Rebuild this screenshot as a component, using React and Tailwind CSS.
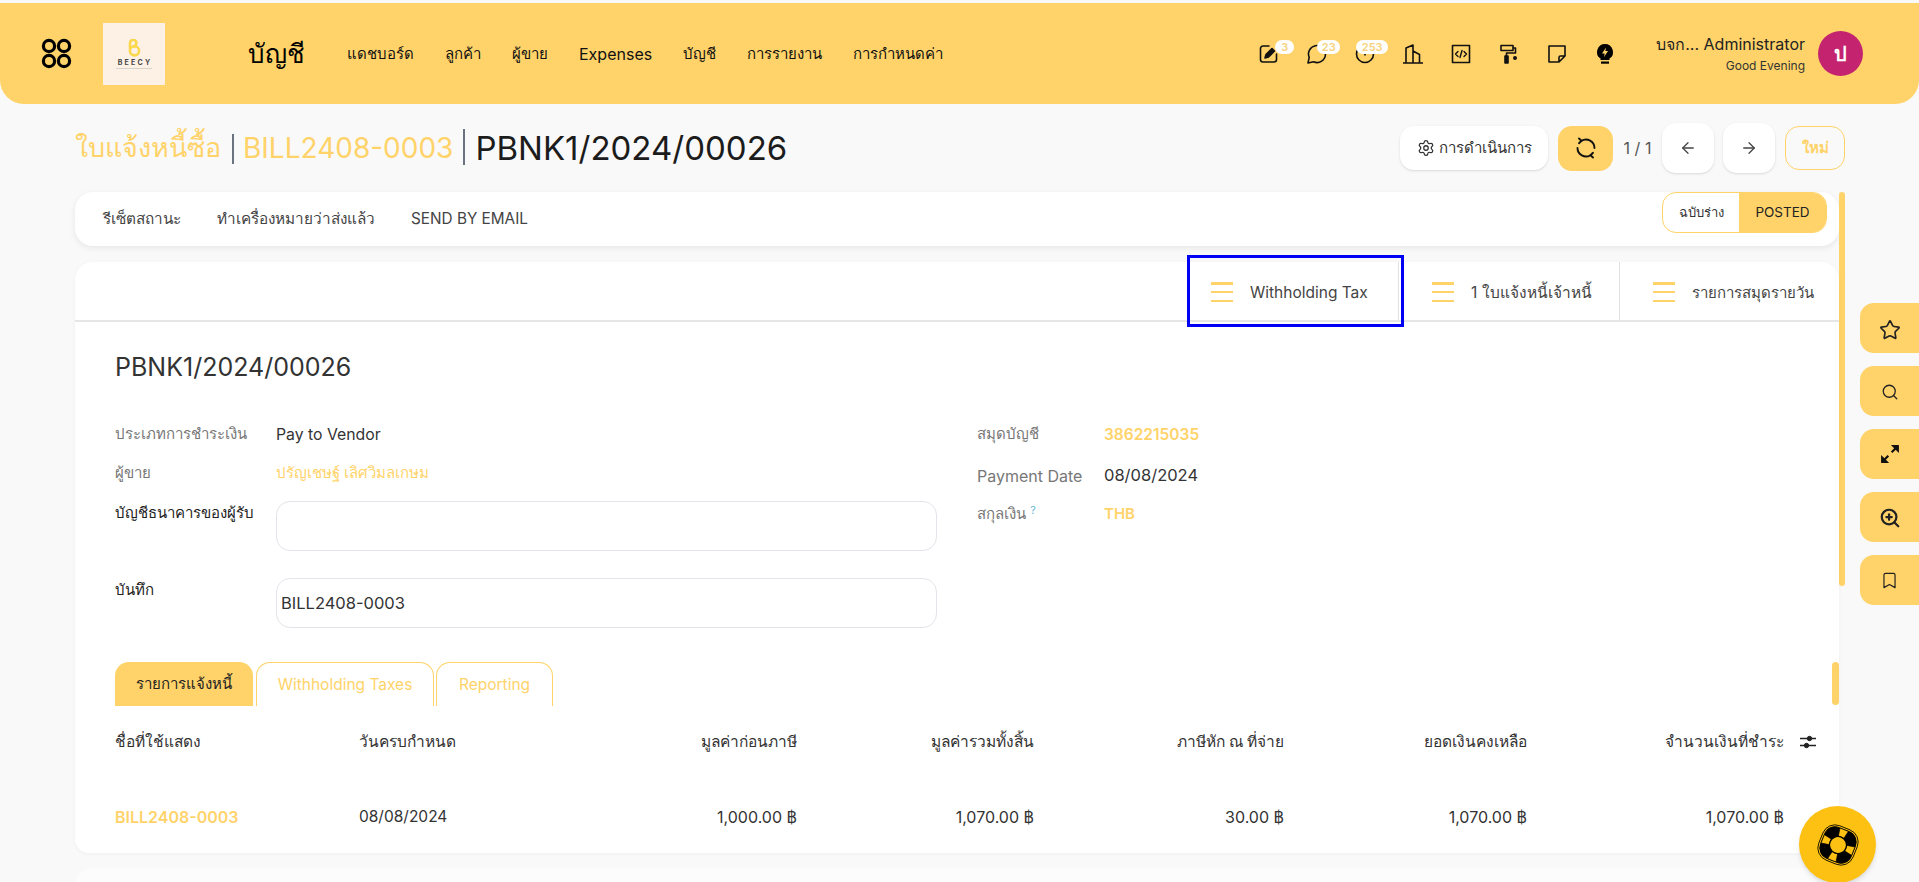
import {ArrowLeft, ArrowRight, Bookmark, Search, Settings, Star, ZoomIn} from "lucide-react";

const font = "font-['Inter','Noto_Sans',sans-serif]";

const navItems = ["แดชบอร์ด", "ลูกค้า", "ผู้ขาย", "Expenses", "บัญชี", "การรายงาน", "การกำหนดค่า"];

function Rings() {
    return (
        <svg width="31" height="31" viewBox="0 0 31 31" fill="none" stroke="#000" strokeWidth="3.2">
            <circle cx="8" cy="8" r="5.6"/>
            <circle cx="23" cy="8" r="5.6"/>
            <circle cx="8" cy="23" r="5.6"/>
            <circle cx="23" cy="23" r="5.6"/>
        </svg>
    );
}

function Logo() {
    return (
        <div className="w-[62px] h-[62px] bg-[#fdf1e6] flex flex-col items-center pt-[16px] shrink-0">
            <svg width="14" height="18" viewBox="0 0 14 18" fill="none" stroke="#fbd84a" strokeWidth="2.6">
                <path d="M3 10V4a3.200 3.200 0 0 1 6.400 0c0 2-1.600 3.200-3.400 4"/>
                <circle cx="7.500" cy="11.800" r="4.600"/>
            </svg>
            <span className="text-[7px] leading-[8px] mt-[2px] font-bold tracking-[2.2px] text-[#444] pl-[2px]">BEECY</span>
            <div className="w-[36px] h-[1px] mt-[1px] bg-[#d8d2cc]"/>
        </div>
    );
}

function Badge({children, className}) {
    return (
        <span className={"absolute top-[-4px] h-[14px] rounded-full bg-white text-[#f5d27a] text-[11px] leading-[14px] font-semibold text-center " + className}>
            {children}
        </span>
    );
}

function TopIcons() {
    const s = {fill: "none", stroke: "#111", strokeWidth: 1.6, strokeLinecap: "round", strokeLinejoin: "round"};
    return (
        <div className="flex items-center gap-[28px]">
            <div className="relative w-[20px] h-[20px]">
                <svg width="20" height="20" viewBox="0 0 20 20" {...s}>
                    <path d="M10 2H4a2.500 2.500 0 0 0-2.500 2.500v11A2.500 2.500 0 0 0 4 18h11a2.500 2.500 0 0 0 2.500-2.500V10"/>
                    <path d="M6 14l1-3.500 6-6 2.500 2.500-6 6z" fill="#111"/>
                </svg>
                <Badge className="left-[16px] w-[19px]">3</Badge>
            </div>
            <div className="relative w-[20px] h-[20px]">
                <svg width="20" height="20" viewBox="0 0 20 20" {...s}>
                    <path d="M18.500 10a8.500 8.500 0 1 0-16.300 3.400L1 19l5.600-1.200A8.500 8.500 0 0 0 18.500 10z"/>
                </svg>
                <Badge className="left-[10px] w-[23px]">23</Badge>
            </div>
            <div className="relative w-[20px] h-[20px]">
                <svg width="20" height="20" viewBox="0 0 20 20" {...s}>
                    <circle cx="10" cy="10" r="8.500"/>
                    <path d="M10 6v5"/>
                </svg>
                <Badge className="left-[1px] w-[32px]">253</Badge>
            </div>
            <svg width="20" height="20" viewBox="0 0 20 20" {...s}>
                <path d="M0.500 19h19M3 19V4l7-3v18M10 7l6.500 3.500V19"/>
            </svg>
            <svg width="20" height="20" viewBox="0 0 20 20" {...s}>
                <rect x="1.500" y="1.500" width="17" height="17"/>
                <path d="M7 7.500L4.500 10 7 12.500M13 7.500l2.500 2.500-2.500 2.500M11 6.500L9 13.500" strokeWidth="1.400"/>
            </svg>
            <svg width="20" height="20" viewBox="0 0 20 20" {...s}>
                <path d="M2 1.500h12v5H2zM14 4h2.500v5H7.500v3"/>
                <rect x="6" y="12" width="3" height="7" fill="#111"/>
                <circle cx="16" cy="14" r="2" fill="#111" stroke="none"/>
            </svg>
            <svg width="20" height="20" viewBox="0 0 20 20" {...s}>
                <path d="M2 2h16v10l-6 6H2zM12 18v-4.500a1.500 1.500 0 0 1 1.500-1.500H18"/>
            </svg>
            <svg width="20" height="22" viewBox="0 0 20 22">
                <path d="M10 1a8 8 0 0 0-4.500 14.600V17h9v-1.400A8 8 0 0 0 10 1z" fill="#000"/>
                <path d="M11 4.500L7 10.500h2.700L9 14l4-6h-2.700z" fill="#ffd369"/>
                <rect x="6" y="18.500" width="8" height="2.200" fill="#000"/>
            </svg>
        </div>
    );
}

function Header() {
    return (
        <header className="mt-[3px] h-[101px] shrink-0 bg-[#ffd369] rounded-b-[24px] flex items-center pl-[41px] pr-[56px]">
            <Rings/>
            <div className="ml-[31px]"><Logo/></div>
            <h1 className="ml-[83px] text-[26px] text-black">บัญชี</h1>
            <nav className="ml-[42px] pt-[1px] flex items-center gap-[31px] text-[15px] text-[#111]">
                {navItems.map(item => <span key={item} className={item === "Expenses" ? "text-[16px]" : ""}>{item}</span>)}
            </nav>
            <div className="ml-auto mr-[41px] pt-[1px]"><TopIcons/></div>
            <div className="text-right mr-[13px]">
                <div className="text-[16px] leading-[20px] text-[#222]">บจก... Administrator</div>
                <div className="text-[12px] leading-[16px] mt-[4px] text-[#333]">Good Evening</div>
            </div>
            <div className="w-[45px] h-[45px] rounded-full bg-[#c4246f] text-white flex items-center justify-center text-[20px] font-bold">ป</div>
        </header>
    );
}

function Toolbar() {
    return (
        <div className="mt-[19px] h-[50px] shrink-0 flex items-center pl-[75px] pr-[74px]">
            <div className="leading-[40px] flex items-center whitespace-nowrap">
                <span className="text-[27px] text-[#ffd369]">ใบแจ้งหนี้ซื้อ</span>
                <span className="w-[2px] h-[30px] bg-[#6b7280] ml-[11px] mr-[9px] mt-[1px]"/>
                <span className="text-[28px] text-[#ffd369]">BILL2408-0003</span>
                <span className="w-[2px] h-[36px] bg-[#6b7280] mx-[10px] mt-[-2px]"/>
                <span className="text-[33px] text-[#1c1c1c]">PBNK1/2024/00026</span>
            </div>
            <div className="ml-auto flex items-center">
                <button className="w-[148px] h-[44px] rounded-[14px] bg-white shadow-sm flex items-center justify-center gap-[4px] text-[15px] text-[#333]">
                    <Settings size={18} strokeWidth={1.7}/> การดำเนินการ
                </button>
                <button className="ml-[10px] w-[55px] h-[45px] rounded-[14px] bg-[#ffd369] flex items-center justify-center">
                    <svg width="22" height="22" viewBox="0 0 22 22" fill="none" stroke="#111" strokeWidth="1.900" strokeLinecap="round">
                        <path d="M6.500 3.800A8.500 8.500 0 0 1 19.500 11"/>
                        <path d="M15.500 18.200A8.500 8.500 0 0 1 2.500 11"/>
                        <path d="M4 1.500l2.500 2.300-2.500 2.400M18 15.800l-2.500 2.400 2.500 2.300"/>
                    </svg>
                </button>
                <span className="w-[49px] text-center text-[16px] text-[#555]">1 / 1</span>
                <button className="w-[52px] h-[50px] rounded-[14px] bg-white shadow-sm flex items-center justify-center text-[#444]">
                    <ArrowLeft size={18} strokeWidth={1.7}/>
                </button>
                <button className="ml-[9px] w-[52px] h-[50px] rounded-[14px] bg-white shadow-sm flex items-center justify-center text-[#444]">
                    <ArrowRight size={18} strokeWidth={1.7}/>
                </button>
                <button className="ml-[10px] w-[60px] h-[44px] rounded-[14px] border border-[#ffd369] text-[#ffd369] text-[15px] font-semibold">ใหม่</button>
            </div>
        </div>
    );
}

function ActionCard() {
    return (
        <div className="h-[54px] bg-white rounded-[18px] shadow-[0_2px_6px_rgba(0,0,0,0.08)] flex pl-[28px] pr-[12px]">
            <div className="flex items-center gap-[36px] text-[15.3px] text-[#444] h-[52px] pt-[2px]">
                <span>รีเซ็ตสถานะ</span>
                <span>ทำเครื่องหมายว่าส่งแล้ว</span>
                <span>SEND BY EMAIL</span>
            </div>
            <div className="ml-auto h-[41px] w-[165px] flex rounded-[14px] border border-[#ffd369] overflow-hidden">
                <span className="w-[76px] flex items-center justify-center text-[13px] text-[#333]">ฉบับร่าง</span>
                <span className="flex-1 bg-[#ffd369] flex items-center justify-center text-[13.5px] text-[#222]">POSTED</span>
            </div>
        </div>
    );
}

function Lines() {
    return (
        <div className="w-[22px] h-[20px] flex flex-col justify-between shrink-0">
            <div className="h-[2.5px] bg-[#ffd369]"/>
            <div className="h-[2.5px] bg-[#ffd369]"/>
            <div className="h-[2.5px] bg-[#ffd369]"/>
        </div>
    );
}

function StatTab({label, className}) {
    return (
        <div className={"h-full flex items-center pl-[33px] pt-[2px] gap-[17px] text-[#444] " + className}>
            <Lines/>
            <span className="whitespace-nowrap mt-[2px]">{label}</span>
        </div>
    );
}

function Field({label, value, valueClass}) {
    return (
        <div className="flex items-center h-[39px] text-[15px]">
            <span className="w-[161px] shrink-0 text-[#777]">{label}</span>
            <span className={valueClass}>{value}</span>
        </div>
    );
}

function FormFields() {
    return (
        <div className="flex mt-[30px]">
            <div className="w-[822px]">
                <Field label="ประเภทการชำระเงิน" value="Pay to Vendor" valueClass="text-[15.8px] text-[#333]"/>
                <Field label="ผู้ขาย" value="ปรัญเชษฐ์ เลิศวิมลเกษม" valueClass="text-[#ffd369]"/>
                <div className="flex mt-[8px] text-[15px]">
                    <span className="w-[161px] shrink-0 text-[#222] pt-[1px]">บัญชีธนาคารของผู้รับ</span>
                    <div className="flex-1 h-[50px] rounded-[14px] border border-[#e3e3ea]"/>
                </div>
                <div className="flex mt-[27px] text-[15px]">
                    <span className="w-[161px] shrink-0 text-[#222] pt-[1px]">บันทึก</span>
                    <div className="flex-1 h-[50px] rounded-[14px] border border-[#e3e3ea] flex items-center pl-[4px] text-[16.5px] text-[#333]">BILL2408-0003</div>
                </div>
            </div>
            <div className="ml-[40px]">
                <div className="w-[430px] flex items-center h-[39px] text-[15px]">
                    <span className="w-[127px] text-[#777]">สมุดบัญชี</span>
                    <span className="text-[#ffd369] font-semibold text-[15.5px]">3862215035</span>
                </div>
                <div className="flex items-center h-[39px] mt-[2px]">
                    <span className="w-[127px] text-[#777] text-[16px]">Payment Date</span>
                    <span className="text-[#333] text-[16.5px]">08/08/2024</span>
                </div>
                <div className="flex items-center h-[39px] text-[15px]">
                    <span className="w-[127px] text-[#777]">สกุลเงิน <sup className="text-[#6bb8d8] text-[11px]">?</sup></span>
                    <span className="text-[#ffd369] font-semibold">THB</span>
                </div>
            </div>
        </div>
    );
}

function LineTabs() {
    return (
        <div className="flex mt-[34px] h-[44px] text-[15.5px]">
            <div className="w-[138px] bg-[#ffd369] rounded-t-[14px] flex items-center justify-center text-[#222] text-[15px]">รายการแจ้งหนี้</div>
            <div className="ml-[3px] w-[178px] rounded-t-[14px] border border-b-0 border-[#ffd369] flex items-center justify-center text-[#ffd369]">Withholding Taxes</div>
            <div className="ml-[2px] w-[117px] rounded-t-[14px] border border-b-0 border-[#ffd369] flex items-center justify-center text-[#ffd369]">Reporting</div>
        </div>
    );
}

function BillTable() {
    const cols = "grid grid-cols-[244px_188px_250px_237px_250px_243px_257px_36px] items-center h-[72px]";
    return (
        <div>
            <div className={cols + " text-[15.5px] font-medium text-[#333]"}>
                <span>ชื่อที่ใช้แสดง</span>
                <span>วันครบกำหนด</span>
                <span className="text-right">มูลค่าก่อนภาษี</span>
                <span className="text-right">มูลค่ารวมทั้งสิ้น</span>
                <span className="text-right">ภาษีหัก ณ ที่จ่าย</span>
                <span className="text-right">ยอดเงินคงเหลือ</span>
                <span className="text-right">จำนวนเงินที่ชำระ</span>
                <span className="flex justify-end pr-[4px]">
                    <svg width="16" height="16" viewBox="0 0 16 16" fill="#222" stroke="#222">
                        <path d="M0 4.500h16M0 11.500h16" strokeWidth="1.300"/>
                        <circle cx="9.500" cy="4.500" r="2.200"/>
                        <circle cx="6.500" cy="11.500" r="2.200"/>
                    </svg>
                </span>
            </div>
            <div className={cols + " mt-[3px] text-[16px] text-[#333]"}>
                <span className="text-[#ffd369] font-semibold">BILL2408-0003</span>
                <span className="text-[15.5px]">08/08/2024</span>
                <span className="text-right">1,000.00 ฿</span>
                <span className="text-right">1,070.00 ฿</span>
                <span className="text-right">30.00 ฿</span>
                <span className="text-right">1,070.00 ฿</span>
                <span className="text-right">1,070.00 ฿</span>
            </div>
        </div>
    );
}

function FormCard() {
    return (
        <div className="relative mt-[16px] h-[591px] bg-white rounded-t-[18px] rounded-b-[14px] shadow-[0_1px_4px_rgba(0,0,0,0.04)]">
            <div className="h-[60px] border-b-2 border-[#e6e6e6] flex justify-end">
                <StatTab label="Withholding Tax" className="w-[221px] text-[15.5px] border-r border-[#e2e2e2]"/>
                <StatTab label="1 ใบแจ้งหนี้เจ้าหนี้" className="w-[221px] text-[15.5px] border-r border-[#e2e2e2]"/>
                <StatTab label="รายการสมุดรายวัน" className="w-[219px] text-[15px]"/>
            </div>
            <div className="pl-[40px]">
                <h2 className="mt-[27px] text-[25px] leading-[36px] text-[#333]">PBNK1/2024/00026</h2>
                <FormFields/>
                <LineTabs/>
                <BillTable/>
            </div>
            <div className="absolute right-0 top-[400px] w-[7px] h-[43px] rounded-full bg-[#ffd369]"/>
        </div>
    );
}

function SideButtons() {
    const btn = "w-[59px] h-[50px] rounded-l-[14px] bg-[#ffd369] flex items-center justify-center text-[#222]";
    return (
        <div className="absolute right-0 top-[303px] flex flex-col gap-[13px]">
            <div className={btn + " pt-[4px]"}><Star size={22} strokeWidth={1.8}/></div>
            <div className={btn + " pt-[2px]"}><Search size={18} strokeWidth={1.7}/></div>
            <div className={btn}>
                <svg width="20" height="20" viewBox="0 0 18 18" fill="#111" stroke="#111" strokeWidth="2">
                    <path d="M10.500 7.500l5-5M7.500 10.500l-5 5" fill="none"/>
                    <path d="M11 1.500h5.500V7zM7 16.500H1.500V11z" strokeWidth="1"/>
                </svg>
            </div>
            <div className={btn + " pt-[2px]"}><ZoomIn size={22} strokeWidth={2.4}/></div>
            <div className={btn}><Bookmark size={19} strokeWidth={1.5}/></div>
        </div>
    );
}

function Lifebuoy() {
    return (
        <svg width="42" height="42" viewBox="0 0 42 42" fill="none" stroke="#000">
            <g transform="rotate(22 21 21)">
                <rect x="4.500" y="4.500" width="33" height="33" rx="11" fill="#000" strokeWidth="1"/>
                <rect x="2.500" y="2.500" width="37" height="37" rx="13" strokeWidth="0.800"/>
                <path d="M16.500 4.500h9l-1.500 8h-6zM16.500 37.500h9l-1.500-8h-6zM4.500 16.500v9l8-1.500v-6zM37.500 16.500v9l-8-1.500v-6z" fill="#fdc113" strokeWidth="0.600"/>
                <circle cx="21" cy="21" r="8.500" fill="#fdc113" strokeWidth="1.200"/>
            </g>
        </svg>
    );
}

export default function App() {
    return (
        <div className={"relative w-[1919px] h-[882px] overflow-hidden bg-[#f9f9f9] flex flex-col " + font}>
            <Header/>
            <Toolbar/>
            <div className="mt-[19px] pl-[75px] flex">
                <div className="w-[1764px] shrink-0">
                    <ActionCard/>
                    <FormCard/>
                    <div className="mt-[15px] h-[40px] bg-[#fcfcfc] rounded-t-[18px]"/>
                </div>
                <div className="w-[6px] h-[394px] rounded-full bg-[#ffd369]"/>
            </div>
            <SideButtons/>
            <div className="absolute left-[1187px] top-[255px] w-[217px] h-[72px] border-[3px] border-[#0000f5]"/>
            <div className="absolute left-[1799px] top-[806px] w-[77px] h-[77px] rounded-full bg-[#fdc113] shadow-md flex items-center justify-center">
                <Lifebuoy/>
            </div>
        </div>
    );
}
